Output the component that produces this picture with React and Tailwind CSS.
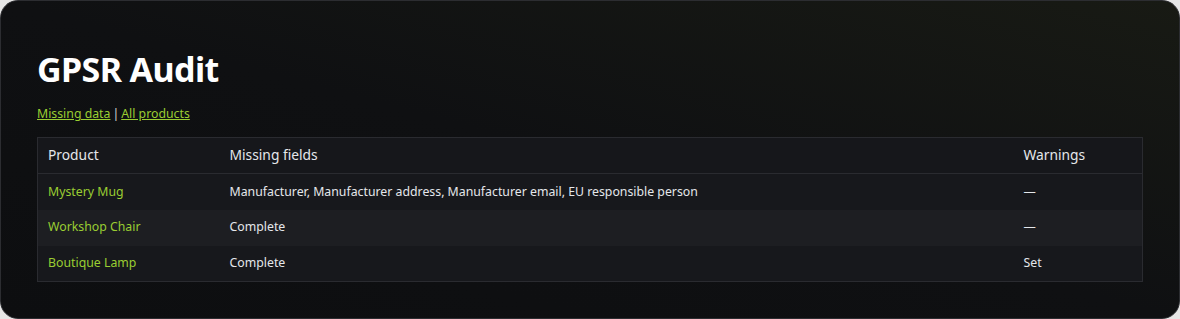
const rows = [
  {
    name: 'Mystery Mug',
    missing: 'Manufacturer, Manufacturer address, Manufacturer email, EU responsible person',
    warnings: '—',
  },
  { name: 'Workshop Chair', missing: 'Complete', warnings: '—' },
  { name: 'Boutique Lamp', missing: 'Complete', warnings: 'Set' },
]

export default function App() {
  return (
    <div className="bg-[#e6e6e6] min-h-[319px]" style={{ fontFamily: '"Noto Sans", sans-serif' }}>
      <div className="h-[319px] rounded-[18px] border border-[#2c2d31] bg-gradient-to-bl from-[#181a14] via-[#0f1012] to-[#0d0e10] px-[36px] pt-[44px]">
        <h1 className="text-[34px] font-bold leading-[48px] text-white tracking-[-0.6px]">GPSR Audit</h1>
        <div className="mt-[12px] text-[12.3px] leading-[18px] text-[#d4d4d4]">
          <a href="#" className="text-[#9acd32] underline">Missing data</a>
          <span className="mx-[2px]">|</span>
          <a href="#" className="text-[#9acd32] underline">All products</a>
        </div>
        <table className="mt-[14px] w-full border-collapse border border-[#2a2b30] text-[12.3px]">
          <thead>
            <tr className="bg-[#16171b] h-[36px] text-left text-[13.8px] text-[#e5e7eb]">
              <th className="w-[182px] px-[10px] font-normal">Product</th>
              <th className="px-[10px] font-normal">Missing fields</th>
              <th className="w-[129px] px-[10px] font-normal">Warnings</th>
            </tr>
          </thead>
          <tbody>
            {rows.map((r, i) => (
              <tr
                key={r.name}
                className={`h-[36px] ${i === 0 ? 'border-t border-[#2a2b30]' : ''} ${i === 1 ? 'bg-[#1d1e22]' : 'bg-[#17181c]'}`}
              >
                <td className="px-[10px] text-[#9acd32]">{r.name}</td>
                <td className="px-[10px] text-[#e5e7eb]">{r.missing}</td>
                <td className="px-[10px] text-[#e5e7eb]">{r.warnings}</td>
              </tr>
            ))}
          </tbody>
        </table>
      </div>
    </div>
  )
}
